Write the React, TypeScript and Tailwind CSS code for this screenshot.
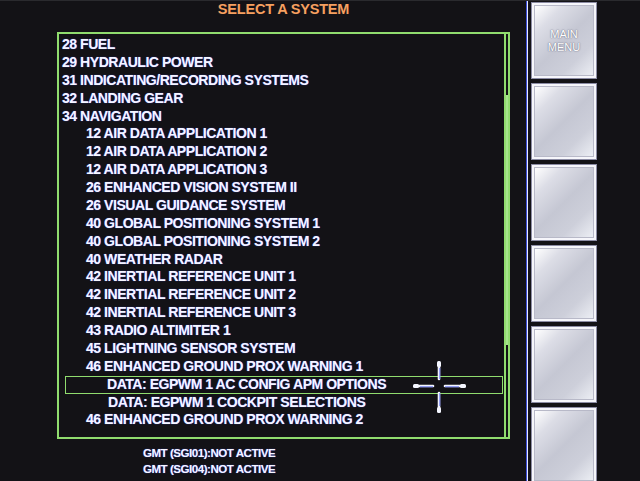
import React from "react"

type Row = { text: string; level: 1 | 2 | 3; selected?: boolean }

const rows: Row[] = [
  { text: "28 FUEL", level: 1 },
  { text: "29 HYDRAULIC POWER", level: 1 },
  { text: "31 INDICATING/RECORDING SYSTEMS", level: 1 },
  { text: "32 LANDING GEAR", level: 1 },
  { text: "34 NAVIGATION", level: 1 },
  { text: "12 AIR DATA APPLICATION 1", level: 2 },
  { text: "12 AIR DATA APPLICATION 2", level: 2 },
  { text: "12 AIR DATA APPLICATION 3", level: 2 },
  { text: "26 ENHANCED VISION SYSTEM II", level: 2 },
  { text: "26 VISUAL GUIDANCE SYSTEM", level: 2 },
  { text: "40 GLOBAL POSITIONING SYSTEM 1", level: 2 },
  { text: "40 GLOBAL POSITIONING SYSTEM 2", level: 2 },
  { text: "40 WEATHER RADAR", level: 2 },
  { text: "42 INERTIAL REFERENCE UNIT 1", level: 2 },
  { text: "42 INERTIAL REFERENCE UNIT 2", level: 2 },
  { text: "42 INERTIAL REFERENCE UNIT 3", level: 2 },
  { text: "43 RADIO ALTIMITER 1", level: 2 },
  { text: "45 LIGHTNING SENSOR SYSTEM", level: 2 },
  { text: "46 ENHANCED GROUND PROX WARNING 1", level: 2 },
  { text: "DATA: EGPWM 1 AC CONFIG APM OPTIONS", level: 3, selected: true },
  { text: "DATA: EGPWM 1 COCKPIT SELECTIONS", level: 3 },
  { text: "46 ENHANCED GROUND PROX WARNING 2", level: 2 },
]

const indent = { 1: "pl-[3px]", 2: "pl-[27px]", 3: "pl-[49px]" }

function SoftKey({ label }: { label?: string[] }) {
  return (
    <div className="h-[77px] w-[66px] shrink-0 border border-[#8c8ca4] bg-[#f6f6fb] p-[2px]">
      <div className="flex h-full w-full flex-col items-center justify-center border border-[#b8b9c8] bg-[linear-gradient(135deg,#ffffff_0%,#dcdde6_22%,#c5c7d3_50%,#cdcfda_75%,#eceef4_100%)]">
        {label?.map((l) => (
          <span
            key={l}
            className="text-[11px] leading-[13px] text-white [text-shadow:0_0_1px_#5d5f74,0_0_2px_#8d8fa4]"
          >
            {l}
          </span>
        ))}
      </div>
    </div>
  )
}

function Crosshair() {
  return (
    <svg className="absolute left-[410px] top-[358px]" width="58" height="56" viewBox="0 0 58 56">
      <g stroke="#f4f6ff" strokeWidth="2.6" strokeLinecap="round">
        <line x1="29" y1="4" x2="29" y2="20" />
        <line x1="29" y1="34" x2="29" y2="52" />
        <line x1="5" y1="27" x2="23" y2="27" />
        <line x1="35" y1="27" x2="54" y2="27" />
      </g>
      <g fill="#f4f6ff">
        <rect x="27" y="2" width="4" height="6" rx="1.5" />
        <rect x="27" y="48" width="4" height="6" rx="1.5" />
        <rect x="3" y="25" width="6" height="4" rx="1.5" />
        <rect x="50" y="25" width="6" height="4" rx="1.5" />
      </g>
      <g stroke="#4a5cf0" strokeWidth="0.8">
        <line x1="29.8" y1="9" x2="29.8" y2="20" />
        <line x1="29.8" y1="34" x2="29.8" y2="47" />
        <line x1="10" y1="27.8" x2="23" y2="27.8" />
        <line x1="35" y1="27.8" x2="49" y2="27.8" />
      </g>
    </svg>
  )
}

export default function App() {
  return (
    <div className="relative flex h-[481px] w-[640px] overflow-hidden border-t border-[#2a2a2e] bg-[#131216] font-['Liberation_Sans',Arial,sans-serif]">
      {/* Main list area */}
      <div className="flex w-[526px] shrink-0 flex-col pl-[57px]">
        <div className="h-[31px] w-[453px] text-center text-[14.5px] font-bold leading-4 tracking-[-0.2px] text-[#f6a060]">
          SELECT A SYSTEM
        </div>

        <div className="flex h-[407px] w-[453px] border-2 border-[#90dc6e]">
          <div className="flex flex-1 flex-col pt-[2px]">
            {rows.map((r) =>
              r.selected ? (
                <div
                  key={r.text}
                  className="ml-[6px] mr-[1px] h-[17.88px] whitespace-nowrap border-[1.5px] border-[#90dc6e] pl-[41px] text-[14px] font-bold leading-[15px] tracking-[-0.45px] text-[#f6f6ff] [text-shadow:0_0_1px_#3c50ff]"
                >
                  {r.text}
                </div>
              ) : (
                <div
                  key={r.text}
                  className={`h-[17.88px] ${indent[r.level]} whitespace-nowrap text-[14px] font-bold leading-[17.88px] tracking-[-0.45px] text-[#f6f6ff] [text-shadow:0_0_1px_#3c50ff]`}
                >
                  {r.text}
                </div>
              )
            )}
          </div>
          {/* Scrollbar */}
          <div className="w-[4px] shrink-0 border-l-2 border-[#90dc6e]">
            <div className="mt-[61px] h-[250px] w-[2px] bg-[#a6e48c]" />
          </div>
        </div>

        <div className="ml-[86px] mt-[6px] text-[11.5px] font-bold leading-4 tracking-[-0.45px] text-[#f6f6ff] [text-shadow:0_0_1px_#3c50ff]">
          <div>GMT (SGI01):NOT ACTIVE</div>
          <div>GMT (SGI04):NOT ACTIVE</div>
        </div>
      </div>

      {/* Divider */}
      <div className="w-[1px] shrink-0 bg-[#3a4cd8]" />
      <div className="w-[1px] shrink-0 bg-[#e6e8ff]" />

      {/* Soft keys */}
      <div className="ml-[3px] flex flex-col gap-[4px] pt-[1px]">
        <SoftKey label={["MAIN", "MENU"]} />
        <SoftKey />
        <SoftKey />
        <SoftKey />
        <SoftKey />
        <SoftKey />
      </div>

      <Crosshair />
    </div>
  )
}
